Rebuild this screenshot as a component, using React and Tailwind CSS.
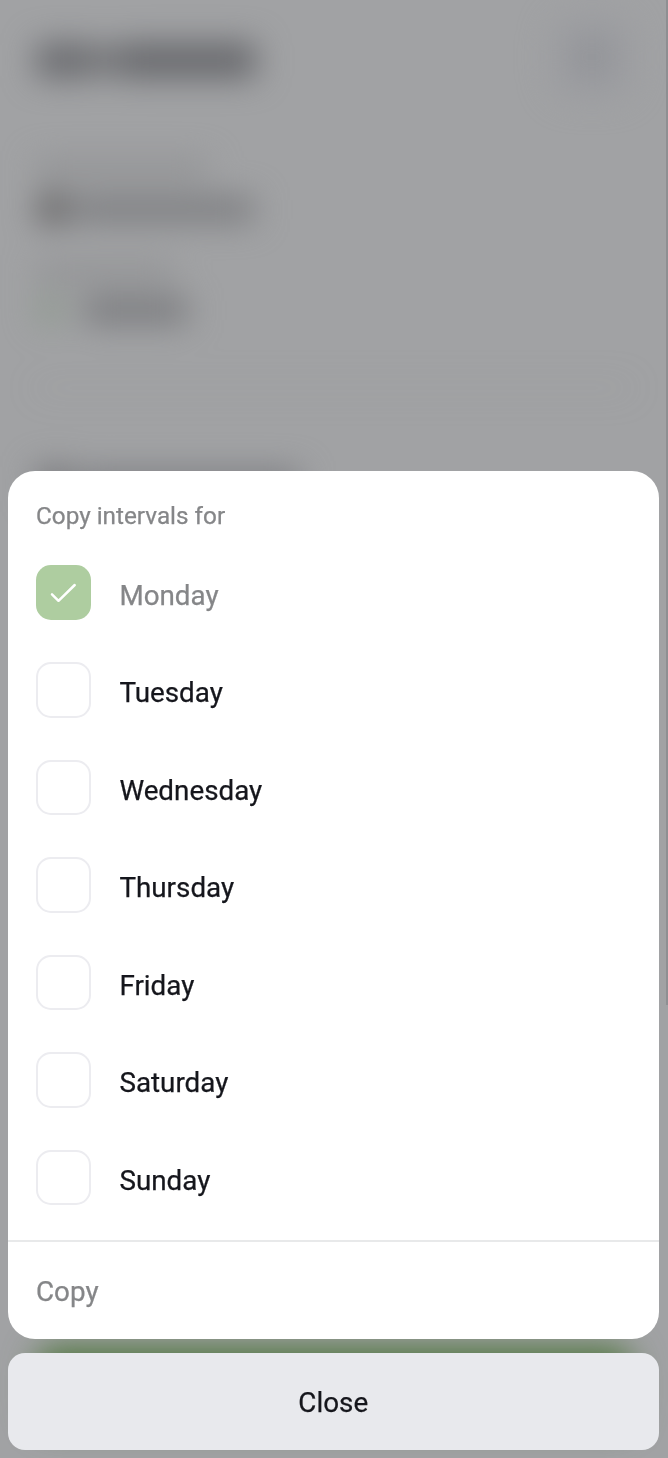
import { useState } from "react";

const DAYS = ["Monday", "Tuesday", "Wednesday", "Thursday", "Friday", "Saturday", "Sunday"];

function DayRow({ label, checked, disabled, onChange }) {
  return (
    <label className="flex h-[97.5px] items-center gap-7 px-7">
      <input type="checkbox" className="sr-only" checked={checked} disabled={disabled} onChange={onChange} />
      <span
        className={`flex size-[55.4px] shrink-0 items-center justify-center rounded-[15px] ${checked ? "bg-[#aecda0]" : "border-2 border-[#ececf0] bg-white"}`}
      >
        {checked && (
          <svg width="28" height="22" viewBox="0 0 28 22" fill="none" stroke="white" strokeWidth="2.5" strokeLinecap="round" strokeLinejoin="round">
            <path d="M2 13.4 8.5 19.8 24.7 4" />
          </svg>
        )}
      </span>
      <span className={`pt-[6.4px] text-[27.8px] leading-8 ${disabled ? "text-[#858688]" : "text-[#15161c]"}`}>
        {label}
      </span>
    </label>
  );
}

// Page behind the sheet, blurred and dimmed
function Backdrop() {
  return (
    <div className="absolute inset-0 flex justify-between overflow-hidden bg-[#a1a2a4]">
      <div className="flex w-[632px] flex-col pl-9 pt-[17px] blur-[16px]">
        <div className="flex h-20 items-center justify-between">
          <div className="flex items-center pt-1.5">
            <div className="h-[35px] w-[52px] rounded bg-[#6a6b6f]" />
            <div className="h-[31px] w-[34px] bg-[#747578]" />
            <div className="h-[35px] w-[134px] rounded bg-[#66676b]" />
          </div>
          <div className="flex size-20 items-center justify-center rounded-[24px] bg-[#9b9ca0]">
            <div className="size-7 bg-[#8e9094]" />
          </div>
        </div>
        <div className="mt-[63px] h-[18px] w-[172px] bg-[#909193]" />
        <div className="mt-[14px] flex items-center gap-1">
          <div className="size-[34px] rounded-full bg-[#656465]" />
          <div className="h-[25px] w-[180px] bg-[#7b7c7f]" />
        </div>
        <div className="mt-[38px] h-[18px] w-[138px] bg-[#909193]" />
        <div className="mt-[14px] flex items-center gap-[20px]">
          <div className="size-7 rounded-full bg-[#8d998d]" />
          <div className="h-[25px] w-[104px] bg-[#78797c]" />
        </div>
        <div className="mt-[63px] h-0.5 bg-[#9b9c9e]" />
        <div className="mt-[78px] flex items-center gap-1.5">
          <div className="h-[34px] w-[38px] bg-[#77787b]" />
          <div className="h-[26px] w-[220px] bg-[#7b7c80]" />
        </div>
        <div className="mb-[32px] mt-auto h-[78px] rounded-[18px] bg-[#4b7439]" />
      </div>
      <div className="h-[1005px] w-0.5 bg-[#8e8f92]" />
    </div>
  );
}

export default function App() {
  const [selected, setSelected] = useState(["Monday"]);

  const toggle = (day) =>
    setSelected((prev) => (prev.includes(day) ? prev.filter((d) => d !== day) : [...prev, day]));

  return (
    <div className="relative h-[1458px] w-[668px] overflow-hidden font-['Roboto',sans-serif] antialiased">
      <Backdrop />
      <div className="relative flex h-full flex-col justify-end gap-[14px] pb-[7.6px] pl-2 pr-[9.5px] will-change-transform [-webkit-text-stroke:0.25px]">
        <div className="flex h-[868px] flex-col overflow-hidden rounded-[27px] bg-white">
          <div className="h-[72.5px] px-7 pt-[28.3px] text-[24.3px] leading-8 text-[#858688]">Copy intervals for</div>
          <div className="flex flex-1 flex-col">
            {DAYS.map((day) => (
              <DayRow
                key={day}
                label={day}
                checked={selected.includes(day)}
                disabled={day === "Monday"}
                onChange={() => toggle(day)}
              />
            ))}
          </div>
          <button
            disabled={selected.length === 1}
            className="flex h-[99px] items-center border-t-2 border-[#e8e9ea] px-7 pt-[2.3px] text-[27.8px] text-[#858688]"
          >
            Copy
          </button>
        </div>
        <button className="h-[97.2px] shrink-0 rounded-[17px] bg-[#e8e9ed] pt-0.5 text-[27.8px] text-[#15161c]">Close</button>
      </div>
    </div>
  );
}
